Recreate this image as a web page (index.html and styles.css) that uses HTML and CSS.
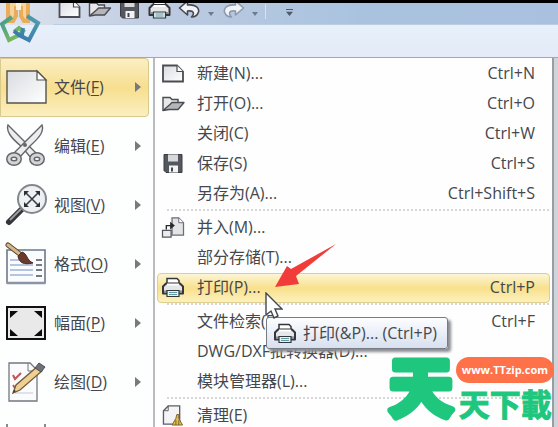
FILE: index.html
```
<!DOCTYPE html>
<html lang="zh-CN">
<head>
    <meta charset="UTF-8">
    <meta name="viewport" content="width=device-width, initial-scale=1.0">
    <title>文件菜单</title>
    <link rel="stylesheet" href="styles.css">
</head>
<body>
    <!-- Shared icons -->
    <svg class="defs" width="0" height="0" aria-hidden="true">
        <defs>
            <linearGradient id="paper" x1="0" y1="0" x2="1" y2="1">
                <stop offset="0" stop-color="#d9dbe0"/>
                <stop offset="1" stop-color="#ffffff"/>
            </linearGradient>
            <symbol id="i-new" viewBox="0 0 24 20">
                <path d="M2 2H16L22 8V18H2Z" fill="url(#paper)" stroke="#4a4c52" stroke-width="1.8"/>
                <path d="M16 2V8H22" fill="#fff" stroke="#4a4c52" stroke-width="1.2"/>
            </symbol>
            <symbol id="i-open" viewBox="0 0 24 20">
                <path d="M2 17V4H9L11 6H17V9" fill="#e8e8ea" stroke="#4a4c52" stroke-width="1.4"/>
                <path d="M2 17L9 11L11 9H23L17 16H8Z" fill="#b5b6b9" stroke="#4a4c52" stroke-width="1.4" stroke-linejoin="round"/>
            </symbol>
            <symbol id="i-save" viewBox="0 0 24 20">
                <path d="M3 1H21V19H5L3 17Z" fill="#55575e" stroke="#3c3e44"/>
                <path d="M7 1H17V8H7Z" fill="#d6d8dc"/>
                <path d="M8 12H17V19H8Z" fill="#f2f3f5"/>
                <path d="M10 14H12V18H10Z" fill="#44464c"/>
            </symbol>
            <symbol id="i-print" viewBox="0 0 24 20">
                <path d="M6 7V1H16L18 3V7" fill="#fff" stroke="#33363b" stroke-width="1.5"/>
                <path d="M5 6H19L22 9V16H2V9Z" fill="#e4e6e9" stroke="#33363b" stroke-width="2" stroke-linejoin="round"/>
                <path d="M6 6H18V8H6Z" fill="#fff"/>
                <path d="M3 14H21" stroke="#8b8f95" stroke-width="2"/>
                <path d="M6 13H18V19H6Z" fill="#e5f3f5" stroke="#33363b" stroke-width="1.2"/>
                <path d="M8 15H16M8 17H16" stroke="#5c99a1" stroke-width="1.2"/>
            </symbol>
            <symbol id="i-undo" viewBox="0 0 24 20">
                <path d="M2 9L10 2V6C18 5 22 9 21 13C20 16 18 18 14 18C17 15 17 11 10 12V16Z" fill="#f2f4f7" stroke="currentColor" stroke-width="1.6" stroke-linejoin="round"/>
            </symbol>
        </defs>
    </svg>

    <header class="titlebar">
        <div class="quickbar">
            <button type="button" class="tool" aria-label="新建"><svg><use href="#i-new"/></svg></button>
            <button type="button" class="tool" aria-label="打开"><svg><use href="#i-open"/></svg></button>
            <button type="button" class="tool" aria-label="保存"><svg><use href="#i-save"/></svg></button>
            <button type="button" class="tool" aria-label="打印"><svg><use href="#i-print"/></svg></button>
            <button type="button" class="tool" aria-label="撤销"><svg><use href="#i-undo"/></svg></button>
            <button type="button" class="drop" aria-label="撤销列表"></button>
            <button type="button" class="tool redo" aria-label="恢复"><svg><use href="#i-undo"/></svg></button>
            <button type="button" class="drop" aria-label="恢复列表"></button>
            <button type="button" class="drop more" aria-label="自定义"></button>
        </div>
        <svg class="app-logo" viewBox="0 0 42 42" aria-hidden="true">
            <defs>
                <linearGradient id="lg" x1="0" y1="0" x2="1" y2="1">
                    <stop offset="0" stop-color="#3f9a97"/>
                    <stop offset="1" stop-color="#8bc34a"/>
                </linearGradient>
                <linearGradient id="lb" x1="1" y1="0" x2="0" y2="1">
                    <stop offset="0" stop-color="#4f9fab"/>
                    <stop offset="1" stop-color="#3575ad"/>
                </linearGradient>
            </defs>
            <path d="M8 0V18H13L16 13V5H21V13L24 18H28V0" fill="#f4d39c" stroke="#e9ac59" stroke-width="4"/>
            <path d="M16 0H21V7H16Z" fill="#fbf1dd"/>
            <path d="M12 14L2 21L9 37L19 32L23 28L19 25L14 29" fill="none" stroke="url(#lg)" stroke-width="4"/>
            <path d="M27 13L38 20L29 37L19 32L14 28M22 32L23 25" fill="none" stroke="url(#lb)" stroke-width="4"/>
        </svg>
    </header>
    <div class="ribbon"></div>

    <main class="app-menu">
        <nav class="side">
            <button type="button" class="side-item active">
                <svg viewBox="0 0 44 44"><path d="M3 6H33L42 15V38H3Z" fill="url(#paper)" stroke="#55534d" stroke-width="1.4"/><path d="M33 6V15H42Z" fill="#fff" stroke="#55534d" stroke-width="1.2"/></svg>
                <span>文件(<u>F</u>)</span>
            </button>
            <button type="button" class="side-item">
                <svg viewBox="0 0 44 44">
                    <g fill="#ededee" stroke="#65666a" stroke-width="1.4">
                        <path d="M4 1C2 7 6 13 18 23L27 34L32 29L23 20Z"/>
                        <path d="M38 1C40 7 37 12 26 22L15 34L10 29L19 20Z"/>
                    </g>
                    <g fill="#fff" stroke="#65666a" stroke-width="6"><ellipse cx="10" cy="35" rx="5" ry="4"/><ellipse cx="33" cy="35" rx="5" ry="4"/></g>
                    <g fill="none" stroke="#d4d4d6" stroke-width="3"><ellipse cx="10" cy="35" rx="5" ry="4"/><ellipse cx="33" cy="35" rx="5" ry="4"/></g>
                    <circle cx="21" cy="21" r="2" fill="#66676b"/>
                </svg>
                <span>编辑(<u>E</u>)</span>
            </button>
            <button type="button" class="side-item">
                <svg viewBox="0 0 44 44">
                    <path d="M18 26L5 39" stroke="#33353a" stroke-width="6" stroke-linecap="round"/>
                    <path d="M17 26L6 37" stroke="#9a9ca0" stroke-width="2"/>
                    <circle cx="28" cy="16" r="14" fill="#edf1f4" stroke="#85878c" stroke-width="2"/>
                    <path d="M21 9L35 23M35 9L21 23" stroke="#3c3e43" stroke-width="1.6"/>
                    <path d="M20 8H25L20 13ZM36 8H31L36 13ZM20 24H25L20 19ZM36 24H31L36 19Z" fill="#2c2e33"/>
                </svg>
                <span>视图(<u>V</u>)</span>
            </button>
            <button type="button" class="side-item">
                <svg viewBox="0 0 44 44">
                    <path d="M3 8H41V41H3Z" fill="#fbfcfe" stroke="#6e7889" stroke-width="1.6"/>
                    <path d="M3 41H41" stroke="#8b94a5" stroke-width="2.6"/>
                    <path d="M6 18H15M6 23H29M6 28H29M6 33H29" stroke="#9fb2d8" stroke-width="1.4"/>
                    <path d="M32 18H38M32 23H38M32 28H38M32 34H38" stroke="#49505c" stroke-width="1.4"/>
                    <path d="M4 3L17 13" stroke="#5b4630" stroke-width="5" stroke-linecap="round"/>
                    <path d="M4 3L17 13" stroke="#d8b88a" stroke-width="3" stroke-linecap="round"/>
                    <path d="M14 14L18 10C24 12 22 18 29 21C20 23 15 21 14 14Z" fill="#6b3a2c" stroke="#47261e"/>
                </svg>
                <span>格式(<u>O</u>)</span>
            </button>
            <button type="button" class="side-item">
                <svg viewBox="0 0 44 44">
                    <path d="M3 6H41V38H3Z" fill="#e9e9ea" stroke="#111" stroke-width="2"/>
                    <path d="M6 10H14L6 17ZM38 10H30L38 17ZM6 35H14L6 28ZM38 35H30L38 28Z" fill="#0c0c0c"/>
                </svg>
                <span>幅面(<u>P</u>)</span>
            </button>
            <button type="button" class="side-item">
                <svg viewBox="0 0 44 44">
                    <path d="M5 3H26L33 10V41H5Z" fill="#fafbfd" stroke="#73777f" stroke-width="1.3"/>
                    <path d="M24 3V11H32" fill="none" stroke="#73777f"/>
                    <path d="M9 15L11 19L17 13M9 25L11 28L17 22" fill="none" stroke="#c0565c" stroke-width="2"/>
                    <path d="M11 33H29" stroke="#c3c9d4"/>
                    <path d="M9 33L12 25L34 6L38 11L16 30Z" fill="#f0cf92" stroke="#6f5c3c" stroke-width="1.3"/>
                    <path d="M31 8L35 3L41 7L37 12Z" fill="#6e7178" stroke="#4b4d52"/>
                    <path d="M9 33L10 30L12 31Z" fill="#333"/>
                </svg>
                <span>绘图(<u>D</u>)</span>
            </button>
            <button type="button" class="side-item" aria-label="标注">
                <svg viewBox="0 0 44 44"><path d="M3 42V5M41 5V42M3 14H41" fill="none" stroke="#55585e" stroke-width="1.4"/></svg>
            </button>
        </nav>

        <section class="commands">
            <button type="button" class="item"><svg><use href="#i-new"/></svg><span>新建(N)...</span><kbd>Ctrl+N</kbd></button>
            <button type="button" class="item"><svg><use href="#i-open"/></svg><span>打开(O)...</span><kbd>Ctrl+O</kbd></button>
            <button type="button" class="item"><svg></svg><span>关闭(C)</span><kbd>Ctrl+W</kbd></button>
            <button type="button" class="item"><svg><use href="#i-save"/></svg><span>保存(S)</span><kbd>Ctrl+S</kbd></button>
            <button type="button" class="item"><svg></svg><span>另存为(A)...</span><kbd>Ctrl+Shift+S</kbd></button>
            <hr>
            <button type="button" class="item">
                <svg viewBox="0 0 24 22">
                    <path d="M11 1H18L23 6V19H11Z" fill="#e3e4e8" stroke="#6b6d73" stroke-width="1.3"/>
                    <path d="M18 1V6H23" fill="#fff" stroke="#6b6d73"/>
                    <path d="M1 14H10V21H1Z" fill="#ececef" stroke="#55575d" stroke-width="1.3"/>
                    <path d="M5 13V9H10" fill="none" stroke="#26282c" stroke-width="1.4"/>
                    <path d="M9 5L14 9L9 13Z" fill="#26282c"/>
                </svg>
                <span>并入(M)...</span>
            </button>
            <button type="button" class="item"><svg></svg><span>部分存储(T)...</span></button>
            <div class="print-row">
                <button type="button" class="item hot" aria-describedby="print-tip"><svg><use href="#i-print"/></svg><span>打印(P)...</span><kbd>Ctrl+P</kbd></button>
                <div class="tip" id="print-tip" role="tooltip"><svg><use href="#i-print"/></svg><span>打印(&amp;P)... (Ctrl+P)</span></div>
                <svg class="arrow" viewBox="0 0 64 46" aria-hidden="true"><path d="M62 2L22 34L25 42L1 45L13 24L17 27Z" fill="#f23c3a"/></svg>
                <svg class="cursor" viewBox="0 0 18 28" aria-hidden="true"><path d="M1 1V23L6 19L9 26L13 24L10 17H17Z" fill="#fff" stroke="#44464b" stroke-width="1.4"/></svg>
            </div>
            <hr>
            <button type="button" class="item"><svg></svg><span>文件检索(F)...</span><kbd>Ctrl+F</kbd></button>
            <button type="button" class="item"><svg></svg><span>DWG/DXF批转换器(D)...</span></button>
            <button type="button" class="item"><svg></svg><span>模块管理器(L)...</span></button>
            <hr>
            <button type="button" class="item">
                <svg viewBox="0 0 24 22">
                    <path d="M2 6L7 1H19V20H2Z" fill="#f4f4f7" stroke="#5b5d63" stroke-width="1.4"/>
                    <path d="M7 1V6H2" fill="none" stroke="#5b5d63"/>
                    <path d="M16 10H18V14L22 21H11L15 14Z" fill="#e3bd4d" stroke="#77622b"/>
                    <path d="M15 16V21M18 16V21" stroke="#77622b"/>
                </svg>
                <span>清理(E)</span>
            </button>
        </section>
    </main>

    <div class="watermark">
        <svg class="mark" viewBox="0 0 70 70"><text x="35" y="58" text-anchor="middle">天</text></svg>
        <div class="site">
            <a href="#">www.TTzip.com</a>
            <span>天下載</span>
        </div>
    </div>
</body>
</html>
```
FILE: styles.css
```
* {
    box-sizing: border-box;
}

body {
    margin: 0;
    height: 100vh;
    overflow: hidden;
    position: relative;
    display: flex;
    flex-direction: column;
    font-family: "Open Sans", "Noto Sans CJK SC", sans-serif;
    font-size: 16px;
    line-height: 24px;
    color: #45474c;
    background: #e4ecf8;
}

button {
    font: inherit;
    color: inherit;
    border: none;
    background: none;
    padding: 0;
    text-align: left;
}

.defs {
    position: absolute;
}

.titlebar {
    position: relative;
    flex: none;
    border-top: 3px solid #000;
    background: linear-gradient(to right, #dfe4ee, #bccae0 30%, #a9c3df 65%, #a9c1de);
}

.quickbar {
    display: flex;
    align-items: flex-end;
    height: 22px;
    margin-left: 53px;
    padding: 0 0 5px 4px;
    overflow: hidden;
    border-bottom: 1px solid #bccde2;
}

.tool {
    flex: none;
    width: 30px;
    height: 20px;
}

.tool svg {
    display: block;
    width: 25px;
    height: 20px;
    color: #45484f;
}

.tool.redo svg {
    color: #8b99ae;
    transform: scaleX(-1);
}

.drop {
    width: 14px;
    height: 15px;
}

.drop::before {
    content: "";
    display: block;
    width: 0;
    margin: 4px 0 0 1px;
    border: 3px solid transparent;
    border-top: 4px solid #6c7a90;
    border-bottom: none;
}

.more {
    width: 36px;
    padding-left: 20px;
    border-left: 1px solid #d8e1ef;
}

.more::before {
    width: 7px;
    height: 7px;
    margin: 2px 0 0;
    border: none;
    background: #4e5a6d;
    clip-path: polygon(0 0, 100% 0, 100% 15%, 0 15%, 0 40%, 100% 40%, 50% 100%, 0 40%);
}

.app-logo {
    position: absolute;
    left: 0;
    top: 0;
    width: 42px;
    height: 42px;
}

.ribbon {
    flex: none;
    height: 32px;
    background: linear-gradient(to bottom, #e6f0fb, #e4eaf7);
}

.app-menu {
    flex: 1;
    min-height: 0;
    display: flex;
    padding-right: 4px;
    overflow: hidden;
    border-top: 1px solid #9aa9bd;
    background: #cfd3da;
}

.side {
    flex: none;
    width: 155px;
    padding-right: 4px;
    background: #fdfefe;
    border-right: 2px solid #b9bbc0;
}

.side-item {
    display: flex;
    align-items: center;
    gap: 6px;
    width: 100%;
    height: 59px;
    padding: 0 7px 2px 3px;
    border: 1px solid transparent;
    border-radius: 0 4px 4px 0;
}

.side-item svg {
    width: 44px;
    height: 44px;
}

.side-item span {
    flex: 1;
}

.side-item u {
    text-underline-offset: 2px;
}

.side-item span::after {
    content: "";
    float: right;
    margin-top: 7px;
    border: 5px solid transparent;
    border-left: 6px solid #77797d;
    border-right: none;
}

.side-item.active {
    border-color: #d9c98c;
    background: linear-gradient(to bottom, #fbeec4, #f7df8f 50%, #fbefc0);
}

.commands {
    flex: 1;
    min-width: 0;
    padding: 1px 2px 0;
    background: #fdfefd;
    border-right: 2px solid #999ca3;
}

.item {
    display: flex;
    align-items: center;
    gap: 12px;
    width: 100%;
    height: 30px;
    padding: 0 14px 2px 3px;
    border: 1px solid transparent;
    border-radius: 4px;
    white-space: nowrap;
}

.item svg,
.tip svg {
    flex: none;
    width: 24px;
    height: 21px;
}

.item span {
    flex: 1;
}

.item kbd {
    font: inherit;
}

.item.hot {
    border-color: #ddcf92;
    background: linear-gradient(to bottom, #fcf5d5, #f8e08c 50%, #fcf0bd);
}

.commands hr {
    height: 4px;
    margin: 0 1px 0 10px;
    border: none;
    border-top: 2px dotted #d6d7d8;
}

.print-row {
    position: relative;
}

.tip {
    position: absolute;
    z-index: 1;
    left: 109px;
    top: 44px;
    display: flex;
    align-items: center;
    gap: 6px;
    height: 32px;
    padding: 0 10px 0 6px;
    white-space: nowrap;
    border: 1px solid #777b85;
    border-radius: 3px;
    background: linear-gradient(to bottom, #fcfdff, #d8e0ef);
    box-shadow: 3px 3px 3px #8a8c92;
}

.arrow {
    position: absolute;
    left: 117px;
    top: -31px;
    width: 64px;
    height: 46px;
}

.cursor {
    position: absolute;
    z-index: 2;
    left: 108px;
    top: 19px;
    width: 18px;
    height: 28px;
}

/* site mark in the corner */
.watermark {
    position: absolute;
    right: 4px;
    bottom: 4px;
    z-index: 3;
    display: flex;
    align-items: flex-end;
    color: #1fc77e;
    font-family: "Noto Sans CJK TC", sans-serif;
    font-weight: bold;
}

.mark {
    width: 70px;
    height: 70px;
    fill: #1fc77e;
    stroke: #1fc77e;
    stroke-width: 7px;
    stroke-linejoin: round;
    font-size: 64px;
}

.site {
    display: flex;
    flex-direction: column;
}

.site a {
    height: 26px;
    padding: 0 6px;
    border-radius: 13px;
    background: #ff7149;
    color: #fff;
    font: bold 11px/26px "Open Sans", sans-serif;
    text-align: center;
    text-decoration: none;
}

.site span {
    padding-left: 3px;
    font-size: 31px;
    line-height: 40px;
    -webkit-text-stroke: 1px #1fc77e;
}
```
